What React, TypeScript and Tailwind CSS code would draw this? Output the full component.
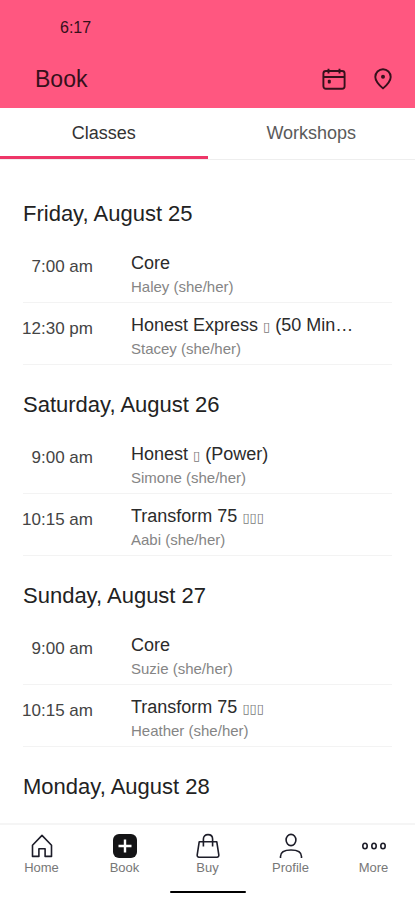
import type { ReactNode } from "react"

const schedule = [
  {
    date: "Friday, August 25",
    classes: [
      { time: "7:00 am", title: "Core", boxes: "", rest: "", teacher: "Haley (she/her)" },
      { time: "12:30 pm", title: "Honest Express ", boxes: "▯", rest: " (50 Min…", teacher: "Stacey (she/her)" },
    ],
  },
  {
    date: "Saturday, August 26",
    classes: [
      { time: "9:00 am", title: "Honest ", boxes: "▯", rest: " (Power)", teacher: "Simone (she/her)" },
      { time: "10:15 am", title: "Transform 75 ", boxes: "▯▯▯", rest: "", teacher: "Aabi (she/her)" },
    ],
  },
  {
    date: "Sunday, August 27",
    classes: [
      { time: "9:00 am", title: "Core", boxes: "", rest: "", teacher: "Suzie (she/her)" },
      { time: "10:15 am", title: "Transform 75 ", boxes: "▯▯▯", rest: "", teacher: "Heather (she/her)" },
    ],
  },
  { date: "Monday, August 28", classes: [] },
]

function Icon({ children }: { children: ReactNode }) {
  return (
    <svg
      viewBox="0 0 26 26"
      className="h-[26px] w-[26px]"
      fill="none"
      stroke="currentColor"
      strokeWidth="1.6"
      strokeLinejoin="round"
      aria-hidden="true"
    >
      {children}
    </svg>
  )
}

const navItems = [
  {
    label: "Home",
    icon: (
      <Icon>
        <path d="M3.5 12.2 13 2.4l9.5 9.8v11.2h-6.4v-7.6H9.9v7.6H3.5z" />
      </Icon>
    ),
  },
  {
    label: "Book",
    icon: (
      <Icon>
        <rect x="1" y="1" width="24" height="24" rx="6" fill="#141416" stroke="none" />
        <path d="M13 6.5v13M6.5 13h13" stroke="white" strokeWidth="2.4" />
      </Icon>
    ),
  },
  {
    label: "Buy",
    icon: (
      <Icon>
        <path d="M4.2 8.8h17.6l2 13c.2 1.4-.6 2.4-1.8 2.4H4c-1.2 0-2-1-1.8-2.4z" />
        <path d="M8.4 13.5V6c0-2.7 1.8-4.4 4.6-4.4s4.6 1.7 4.6 4.4v7.5" />
      </Icon>
    ),
  },
  {
    label: "Profile",
    icon: (
      <Icon>
        <ellipse cx="13" cy="7" rx="4.9" ry="5.6" />
        <path d="M2.5 25v-1.5c0-4.2 3.2-6.5 10.5-6.5s10.5 2.3 10.5 6.5V25" />
      </Icon>
    ),
  },
  {
    label: "More",
    icon: (
      <Icon>
        <ellipse cx="4" cy="13" rx="2.2" ry="2.7" />
        <ellipse cx="13" cy="13" rx="2.2" ry="2.7" />
        <ellipse cx="22" cy="13" rx="2.2" ry="2.7" />
      </Icon>
    ),
  },
]

export default function App() {
  return (
    <div className="flex h-screen flex-col overflow-hidden bg-white font-['Liberation_Sans',Arial,sans-serif] text-[#222]">
      <header className="shrink-0 bg-[#ff5780] pb-2 text-[#35101b]">
        <div className="px-[60px] pt-[18px] text-base leading-5">6:17</div>
        <div className="flex items-center justify-between pt-5 pr-5 pl-[35px]">
          <h1 className="text-[23px] leading-[42px]">Book</h1>
          <div className="flex items-center gap-[25px]">
            <button type="button" aria-label="Choose date">
              <svg viewBox="0 0 24 24" className="h-6 w-6" fill="none" stroke="currentColor" strokeWidth="1.9" aria-hidden="true">
                <rect x="1.4" y="4" width="21.2" height="17.8" rx="2.5" />
                <path d="M1.5 10h21M6.5 1.8v4.8M17.5 1.8v4.8" />
                <rect x="5.8" y="12.8" width="3" height="3.6" rx="1" fill="currentColor" stroke="none" />
              </svg>
            </button>
            <button type="button" aria-label="Choose location">
              <svg viewBox="0 0 24 24" className="h-6 w-6" fill="none" stroke="currentColor" strokeWidth="1.9" strokeLinejoin="round" aria-hidden="true">
                <path d="M12 21.4C7 17 4.3 13.6 4.3 9.9a7.7 7.7 0 0 1 15.4 0c0 3.7-2.7 7.1-7.7 11.5z" />
                <circle cx="12" cy="9.8" r="2" fill="currentColor" stroke="none" />
              </svg>
            </button>
          </div>
        </div>
      </header>

      <div className="grid shrink-0 grid-cols-2 border-b border-[#eeeeee] text-lg leading-[46px]">
        <button type="button" className="border-b-3 border-[#ee3668] pt-[2px] text-[#333]">
          Classes
        </button>
        <button type="button" className="border-b-3 border-transparent pt-[2px] text-[#5a5a5a]">
          Workshops
        </button>
      </div>

      <main className="min-h-0 flex-1 overflow-hidden px-[23px] pt-[14px]">
        {schedule.map((day) => (
          <section key={day.date}>
            <h2 className="pt-[25px] pb-3 text-[22px] leading-[30px]">{day.date}</h2>
            <ul>
              {day.classes.map((item) => (
                <li key={item.time} className="flex h-[62px] gap-[38px] border-b border-[#f3f3f3]">
                  <div className="flex w-[70px] shrink-0 justify-end pt-[14px] text-[17px] leading-6 whitespace-nowrap text-[#444]">
                    {item.time}
                  </div>
                  <div className="min-w-0 flex-1 pt-[10px]">
                    <h3 className="truncate text-lg leading-6 text-[#2b2b2b]">
                      {item.title}
                      {item.boxes && <span className="font-['DejaVu_Sans'] text-[13px] leading-4 text-[#777]">{item.boxes}</span>}
                      {item.rest}
                    </h3>
                    <p className="text-[15px] leading-6 text-[#858585]">{item.teacher}</p>
                  </div>
                </li>
              ))}
            </ul>
          </section>
        ))}
      </main>

      <nav className="shrink-0 border-t-2 border-[#f5f5f5] bg-white pt-2 pb-[7px]">
        <div className="grid grid-cols-5">
          {navItems.map((item) => (
            <a key={item.label} href="#" className="flex flex-col items-center text-[#1d1d29]">
              {item.icon}
              <span className="text-[13px] leading-[18px] text-[#777]">{item.label}</span>
            </a>
          ))}
        </div>
        <div className="mx-auto mt-[14px] h-[2px] w-[76px] rounded-full bg-black" />
      </nav>
    </div>
  )
}
